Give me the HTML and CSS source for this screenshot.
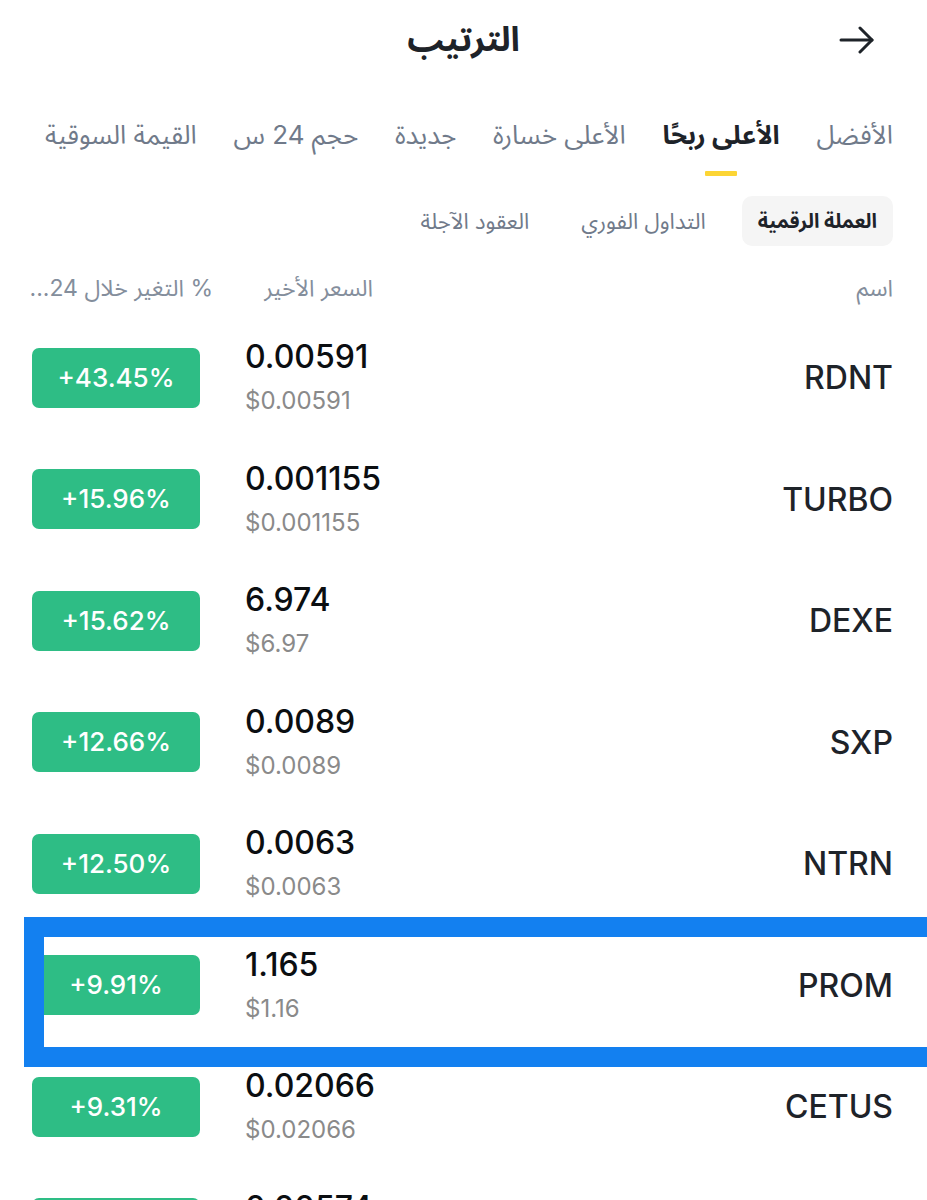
FILE: index.html
```html
<!DOCTYPE html>
<html lang="ar" dir="rtl">
<head>
    <meta charset="UTF-8">
    <meta name="viewport" content="width=device-width, initial-scale=1.0">
    <title>الترتيب</title>
    <link rel="stylesheet" href="styles.css">
</head>
<body>
    <div class="topbar">
        <button class="back-button" aria-label="رجوع">
            <svg width="36" height="28" viewBox="0 0 36 28" fill="none" stroke="#1e2329" stroke-width="3" stroke-linecap="round" stroke-linejoin="round">
                <path d="M2 14 H33"></path>
                <path d="M21 2 L33 14 L21 26"></path>
            </svg>
        </button>
        <h1 class="title">الترتيب</h1>
        <span></span>
    </div>

    <div class="tabs">
        <div class="tab">الأفضل</div>
        <div class="tab active">الأعلى ربحًا</div>
        <div class="tab">الأعلى خسارة</div>
        <div class="tab">جديدة</div>
        <div class="tab">حجم 24 س</div>
        <div class="tab">القيمة السوقية</div>
    </div>

    <div class="subtabs">
        <div class="subtab active">العملة الرقمية</div>
        <div class="subtab">التداول الفوري</div>
        <div class="subtab">العقود الآجلة</div>
    </div>

    <div class="list-head">
        <div class="col-name">اسم</div>
        <div class="col-price">السعر الأخير</div>
        <div class="col-change">% التغير خلال 24...</div>
    </div>

    <div class="list">
        <div class="row">
            <div class="symbol">RDNT</div>
            <div class="price"><div class="last">0.00591</div><div class="usd">$0.00591</div></div>
            <div class="badge">+43.45%</div>
        </div>
        <div class="row">
            <div class="symbol">TURBO</div>
            <div class="price"><div class="last">0.001155</div><div class="usd">$0.001155</div></div>
            <div class="badge">+15.96%</div>
        </div>
        <div class="row">
            <div class="symbol">DEXE</div>
            <div class="price"><div class="last">6.974</div><div class="usd">$6.97</div></div>
            <div class="badge">+15.62%</div>
        </div>
        <div class="row">
            <div class="symbol">SXP</div>
            <div class="price"><div class="last">0.0089</div><div class="usd">$0.0089</div></div>
            <div class="badge">+12.66%</div>
        </div>
        <div class="row">
            <div class="symbol">NTRN</div>
            <div class="price"><div class="last">0.0063</div><div class="usd">$0.0063</div></div>
            <div class="badge">+12.50%</div>
        </div>
        <div class="row marked">
            <div class="symbol">PROM</div>
            <div class="price"><div class="last">1.165</div><div class="usd">$1.16</div></div>
            <div class="badge">+9.91%</div>
            <div class="mark"></div>
        </div>
        <div class="row">
            <div class="symbol">CETUS</div>
            <div class="price"><div class="last">0.02066</div><div class="usd">$0.02066</div></div>
            <div class="badge">+9.31%</div>
        </div>
        <div class="row">
            <div class="symbol">ACE</div>
            <div class="price"><div class="last">0.00574</div><div class="usd">$0.00574</div></div>
            <div class="badge">+9.05%</div>
        </div>
    </div>
</body>
</html>
```

FILE: styles.css
```css
body {
    font-family: 'Inter', 'Noto Sans Arabic', 'DejaVu Sans', sans-serif;
    background-color: #ffffff;
    color: #1e2329;
    margin: 0;
    padding: 0;
    overflow: hidden;
}
.topbar {
    display: grid;
    grid-template-columns: 1fr auto 1fr;
    align-items: center;
    height: 80px;
}
.back-button {
    justify-self: start;
    margin-right: 52px;
    background: none;
    border: none;
    padding: 0;
    display: flex;
    cursor: pointer;
}
.title {
    margin: 0;
    font-size: 34px;
    font-weight: 700;
    color: #1e2329;
}
.tabs {
    display: flex;
    justify-content: space-between;
    padding: 0 34px 0 45px;
}
.tab {
    display: flex;
    flex-direction: column;
    align-items: center;
    padding-top: 36px;
    font-size: 26px;
    line-height: 38px;
    color: #707a8a;
    white-space: nowrap;
}
.tab::after {
    content: '';
    display: block;
    width: 32px;
    height: 5px;
    margin-top: 17px;
    border-radius: 1px;
}
.tab.active {
    color: #1e2329;
    font-weight: 700;
}
.tab.active::after {
    background-color: #fcd535;
}
.subtabs {
    display: flex;
    gap: 20px;
    padding: 0 34px;
    margin-top: 20px;
}
.subtab {
    padding: 0 16px;
    height: 50px;
    line-height: 50px;
    font-size: 22px;
    color: #707a8a;
    border-radius: 10px;
    white-space: nowrap;
}
.subtab.active {
    background-color: #f5f5f5;
    color: #1e2329;
    font-weight: 700;
    font-size: 20px;
}
.list-head {
    display: flex;
    align-items: center;
    margin-top: 28px;
    padding: 0 34px 0 32px;
    font-size: 23px;
    line-height: 28px;
    color: #848e9c;
}
.col-name {
    flex: 1;
}
.col-price {
    width: 160px;
}
.col-change {
    width: 181px;
    white-space: nowrap;
}
.list {
    margin-top: 15px;
}
.row {
    position: relative;
    display: flex;
    align-items: center;
    gap: 45px;
    height: 121.5px;
    padding: 0 34px 0 32px;
}
.symbol {
    flex: 1;
    font-size: 32px;
    font-weight: 500;
    color: #1e2329;
}
.price {
    width: 200px;
    direction: ltr;
    text-align: left;
}
.last {
    font-size: 32px;
    font-weight: 500;
    line-height: 34px;
    color: #0b0e11;
}
.usd {
    margin-top: 13px;
    font-size: 24px;
    line-height: 28px;
    color: #8a8a8a;
}
.badge {
    width: 168px;
    height: 60px;
    line-height: 60px;
    border-radius: 7px;
    background-color: #2ebd85;
    color: #ffffff;
    font-size: 26px;
    font-weight: 500;
    text-align: center;
    direction: ltr;
}
.mark {
    position: absolute;
    top: -8px;
    bottom: -21px;
    left: 24px;
    right: -30px;
    border: 20px solid #1380f0;
    pointer-events: none;
}
```
